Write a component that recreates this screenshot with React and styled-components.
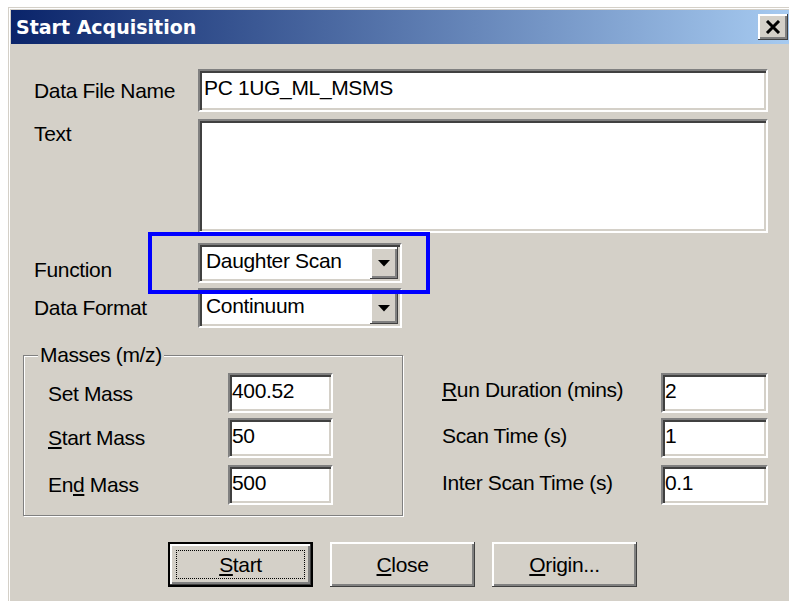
import React from "react";
import styled, { createGlobalStyle } from "styled-components";

const GlobalStyle = createGlobalStyle`
  html, body {
    margin: 0;
    padding: 0;
    background: #ffffff;
    overflow: hidden;
  }
  body {
    font-family: "Liberation Sans", Arial, sans-serif;
  }
`;

const face = `
  font-family: "Liberation Sans", Arial, sans-serif;
  font-size: 21px;
  letter-spacing: -0.35px;
  line-height: 24px;
  color: #000000;
`;

const raised = `
  background: #d4d0c8;
  box-shadow:
    inset -1px -1px #404040,
    inset 2px 2px #ffffff,
    inset -3px -3px #808080;
`;

const sunken = `
  background: #ffffff;
  border: 2px solid;
  border-color: #808080 #ffffff #ffffff #808080;
  box-shadow: inset 2px 2px #404040, inset -2px -2px #d4d0c8;
`;

const Page = styled.div`
  width: 789px;
  height: 601px;
  overflow: hidden;
`;

/* strip of the document page visible above the dialog */
const PageStrip = styled.div`
  height: 7px;
  overflow: hidden;
  padding-left: 118px;
`;

const PageLine = styled.p`
  margin: -24px 0 0;
  ${face}
  white-space: nowrap;
`;

const Window = styled.div`
  margin-left: 8px;
  height: 594px;
  box-sizing: border-box;
  background: #d4d0c8;
  border-top: 1px solid #d4d0c8;
  border-left: 1px solid #d4d0c8;
  box-shadow: inset 1px 1px #ffffff;
  padding: 2px 0 0 2px;
  display: flex;
  flex-direction: column;
`;

const TitleBar = styled.div`
  flex: none;
  height: 34px;
  display: flex;
  align-items: center;
  justify-content: space-between;
  padding: 0 1px 0 5px;
  background: linear-gradient(to right, #0a246a, #a6caf0);
`;

const Title = styled.h1`
  margin: 0;
  font-family: "DejaVu Sans", Verdana, sans-serif;
  font-weight: bold;
  font-size: 19px;
  line-height: 24px;
  color: #ffffff;
`;

const CloseBox = styled.button`
  width: 30px;
  height: 26px;
  padding: 0;
  border: none;
  display: flex;
  align-items: center;
  justify-content: center;
  ${raised}
`;

const Body = styled.div`
  position: relative;
  flex: 1;
  padding: 25px 0 0 12px;
`;

const FieldRow = styled.div`
  display: flex;
  align-items: flex-start;
  padding-left: 11px;
  margin-top: ${(p) => p.$gap || 0}px;
`;

const Label = styled.label`
  ${face}
  flex: none;
  width: ${(p) => p.$width || 164}px;
  padding-top: ${(p) => p.$top || 0}px;
  white-space: nowrap;
`;

const Key = styled.span`
  text-decoration: underline;
  text-underline-offset: 2px;
`;

/* the input centres its line in the content box, so the bottom padding lifts the text */
const TextInput = styled.input`
  ${face}
  ${sunken}
  box-sizing: border-box;
  width: ${(p) => p.$width}px;
  height: ${(p) => p.$height || 40}px;
  padding: 0 0 ${(p) => p.$padBottom || 5}px ${(p) => p.$padLeft || 2}px;
  margin: 0;
  outline: none;
  display: block;
`;

const TextArea = styled.textarea`
  ${face}
  ${sunken}
  box-sizing: border-box;
  width: 570px;
  height: 114px;
  margin: 0;
  padding: 3px 4px;
  resize: none;
  outline: none;
  display: block;
`;

const Combo = styled.div`
  ${sunken}
  box-sizing: border-box;
  width: 204px;
  height: 40px;
  padding: 2px;
  display: flex;
`;

const ComboValue = styled.span`
  ${face}
  flex: 1;
  padding: 2px 0 0 4px;
  white-space: nowrap;
  overflow: hidden;
`;

const ArrowButton = styled.span`
  flex: none;
  width: 28px;
  display: flex;
  align-items: center;
  justify-content: center;
  ${raised}
`;

/* blue call-out frame drawn over the Function selector */
const Highlight = styled.div`
  position: absolute;
  left: 137px;
  top: 188px;
  width: 282px;
  height: 62px;
  box-sizing: border-box;
  border: 4px solid #0000ff;
  pointer-events: none;
`;

const Lower = styled.div`
  display: flex;
  align-items: flex-start;
  margin-top: 15px;
`;

const Group = styled.fieldset`
  margin: 0;
  width: 380px;
  box-sizing: border-box;
  padding: 0 10px 10px 14px;
  border: 1px solid #808080;
  box-shadow: inset 1px 1px #ffffff, 1px 1px #ffffff;
`;

const Legend = styled.legend`
  ${face}
  padding: 0 2px;
  background: #d4d0c8;
`;

const ParamRow = styled.div`
  display: flex;
  align-items: flex-start;
  padding-left: ${(p) => p.$indent || 0}px;
  margin-top: ${(p) => p.$gap || 0}px;
`;

const SideColumn = styled.div`
  display: flex;
  flex-direction: column;
  margin: 30px 0 0 39px;
`;

const ButtonRow = styled.div`
  display: flex;
  gap: 17px;
  margin-top: 26px;
  padding-left: 145px;
`;

const PushButton = styled.button`
  ${face}
  position: relative;
  width: 145px;
  height: 45px;
  padding: 0;
  border: ${(p) => (p.$default ? "2px solid #000000" : "none")};
  box-sizing: border-box;
  display: flex;
  align-items: center;
  justify-content: center;
  ${raised}
`;

const FocusRing = styled.span`
  position: absolute;
  inset: 6px;
  border: 1px dotted #000000;
  pointer-events: none;
`;

function DropArrow() {
  return (
    <svg width="12" height="7" viewBox="0 0 12 7">
      <path d="M0 0 H12 L6 6.5 Z" fill="#000" />
    </svg>
  );
}

function CloseGlyph() {
  return (
    <svg width="16" height="14" viewBox="0 0 16 14">
      <path d="M2 1 L14 13 M14 1 L2 13" stroke="#000" strokeWidth="3" />
    </svg>
  );
}

export default function App() {
  return (
    <>
      <GlobalStyle />
      <Page>
        <PageStrip>
          <PageLine>pply, by typing along with the gig</PageLine>
        </PageStrip>
        <Window>
          <TitleBar>
            <Title>Start Acquisition</Title>
            <CloseBox aria-label="Close">
              <CloseGlyph />
            </CloseBox>
          </TitleBar>
          <Body>
            <FieldRow>
              <Label $top={10}>Data File Name</Label>
              <TextInput
                readOnly
                defaultValue="PC 1UG_ML_MSMS"
                $width={570}
                $height={43}
                $padBottom={5}
                $padLeft={4}
              />
            </FieldRow>
            <FieldRow $gap={7}>
              <Label $top={3}>Text</Label>
              <TextArea readOnly defaultValue="" />
            </FieldRow>
            <FieldRow $gap={10}>
              <Label $top={15}>Function</Label>
              <Combo>
                <ComboValue>Daughter Scan</ComboValue>
                <ArrowButton>
                  <DropArrow />
                </ArrowButton>
              </Combo>
            </FieldRow>
            <FieldRow $gap={5}>
              <Label $top={8}>Data Format</Label>
              <Combo>
                <ComboValue>Continuum</ComboValue>
                <ArrowButton>
                  <DropArrow />
                </ArrowButton>
              </Combo>
            </FieldRow>

            <Lower>
              <Group>
                <Legend>Masses (m/z)</Legend>
                <ParamRow $indent={10} $gap={6}>
                  <Label $width={180} $top={9}>Set Mass</Label>
                  <TextInput readOnly defaultValue="400.52" $width={105} />
                </ParamRow>
                <ParamRow $indent={10} $gap={5}>
                  <Label $width={180} $top={8}>
                    <Key>S</Key>tart Mass
                  </Label>
                  <TextInput readOnly defaultValue="50" $width={105} />
                </ParamRow>
                <ParamRow $indent={10} $gap={7}>
                  <Label $width={180} $top={8}>
                    En<Key>d</Key> Mass
                  </Label>
                  <TextInput readOnly defaultValue="500" $width={105} />
                </ParamRow>
              </Group>

              <SideColumn>
                <ParamRow>
                  <Label $width={219} $top={5}>
                    <Key>R</Key>un Duration (mins)
                  </Label>
                  <TextInput readOnly defaultValue="2" $width={107} />
                </ParamRow>
                <ParamRow $gap={5}>
                  <Label $width={219} $top={6}>Scan Time (s)</Label>
                  <TextInput readOnly defaultValue="1" $width={107} />
                </ParamRow>
                <ParamRow $gap={7}>
                  <Label $width={219} $top={6}>Inter Scan Time (s)</Label>
                  <TextInput readOnly defaultValue="0.1" $width={107} />
                </ParamRow>
              </SideColumn>
            </Lower>

            <ButtonRow>
              <PushButton $default>
                <Key>S</Key>tart
                <FocusRing />
              </PushButton>
              <PushButton>
                <Key>C</Key>lose
              </PushButton>
              <PushButton>
                <Key>O</Key>rigin...
              </PushButton>
            </ButtonRow>

            <Highlight />
          </Body>
        </Window>
      </Page>
    </>
  );
}
